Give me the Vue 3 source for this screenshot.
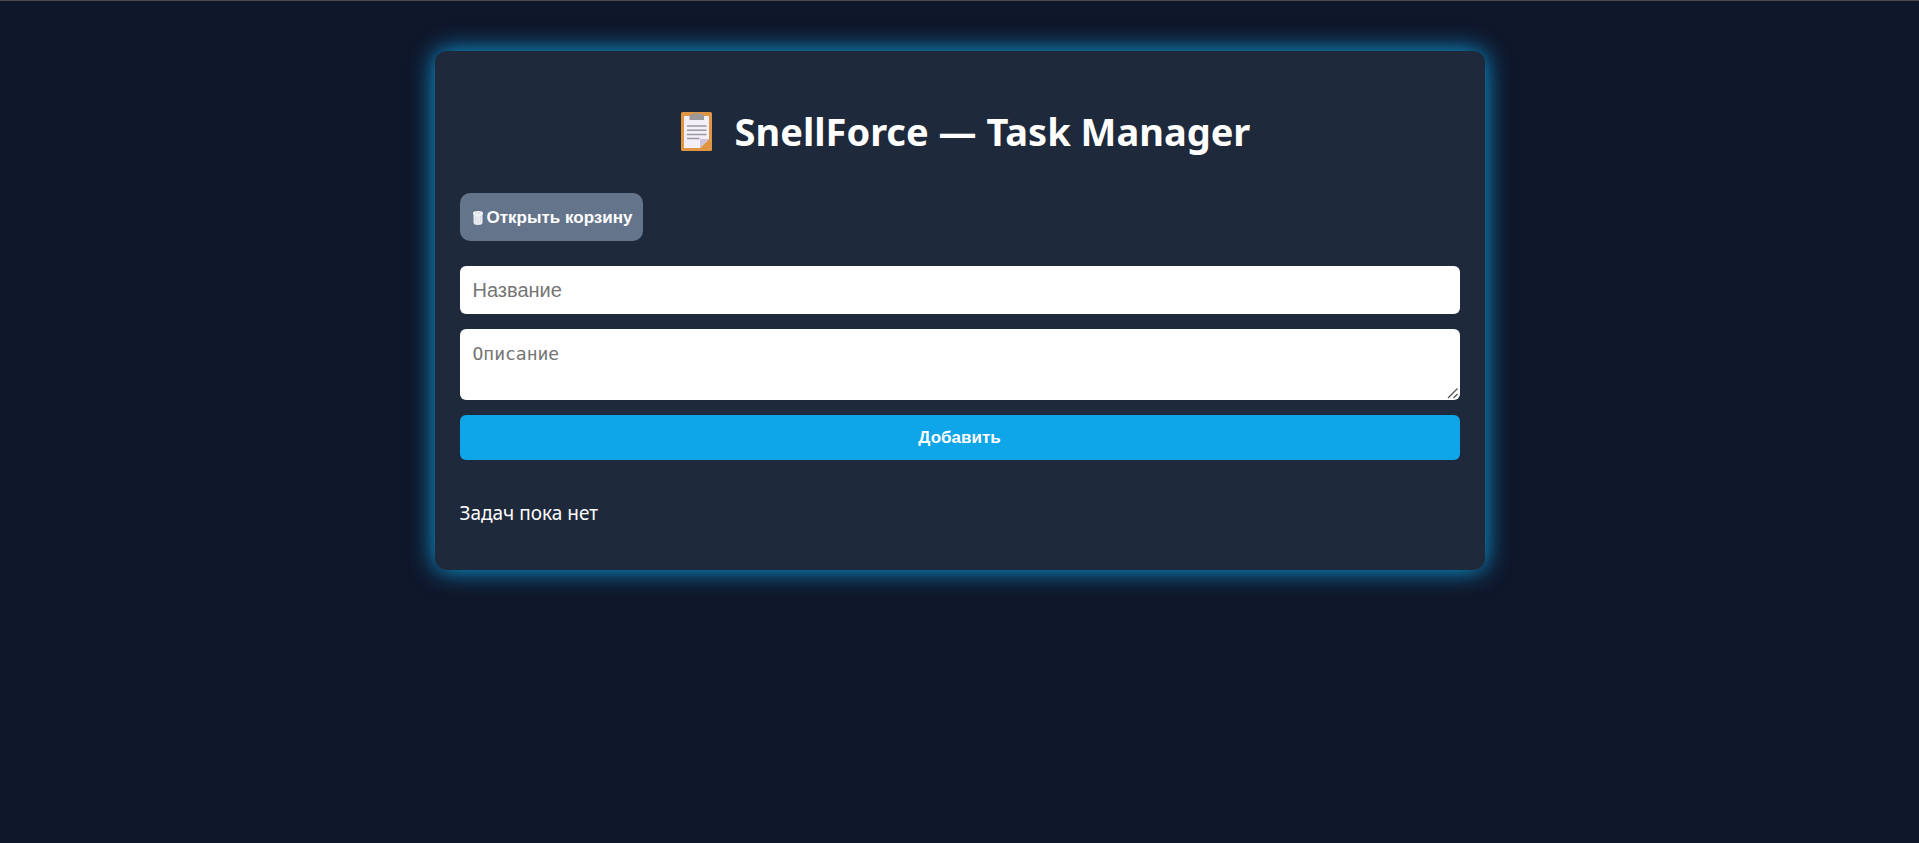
<script setup>
import { ref } from 'vue'

const title = ref('')
const description = ref('')
const tasks = ref([])

function addTask() {
  if (!title.value.trim()) return
  tasks.value.push({ title: title.value, description: description.value })
  title.value = ''
  description.value = ''
}
</script>

<template>
  <div class="page">
    <main class="card">
      <h1>
        <svg class="clipboard" viewBox="0 0 56 40" aria-hidden="true">
          <rect x="12" y="1" width="31" height="39" rx="1.5" fill="#e09542" />
          <path d="M15 5H40V28L31 37H15Z" fill="#f3eef8" />
          <path d="M31 28H40L31 37Z" fill="#cdc4dc" />
          <path d="M20.500 9V5.500Q20.500 3 23 3H25A2.700 2.700 0 0 1 30 3H32.500Q35 3 35 5.500V9Z" fill="#9a9a9a" />
          <circle cx="27.500" cy="3" r="1" fill="#e09542" />
          <path d="M18 15H37.500M18 19.200H37.500M18 23.500H37.500M18 27.500H30.500" stroke="#9c9aa0" stroke-width="1.500" />
        </svg>
        SnellForce — Task Manager
      </h1>

      <button type="button" class="trash">
        <svg class="bin" viewBox="0 0 10 14" aria-hidden="true">
          <path d="M0.500 2H9.500V11.500Q9.500 14 5 14Q0.500 14 0.500 11.500Z" fill="#e9edf1" />
          <ellipse cx="5" cy="2.200" rx="5" ry="2.200" fill="#f4f5f7" />
          <ellipse cx="5" cy="2.300" rx="3" ry="0.800" fill="#d5d8de" />
          <path d="M2.500 5V12M5 5.500V12.500M7.500 5V12" stroke="#d3dae3" stroke-width="0.800" />
        </svg>
        Открыть корзину
      </button>

      <form class="form" @submit.prevent="addTask">
        <input v-model="title" type="text" placeholder="Название" aria-label="Название" />
        <div class="area">
          <textarea v-model="description" placeholder="Описание" aria-label="Описание"></textarea>
          <svg class="grip" viewBox="0 0 12 12" aria-hidden="true">
            <path d="M1 11L10.500 1.500M6.500 11L10.500 7" fill="none" stroke="#555" stroke-width="1.300" />
          </svg>
        </div>
        <button type="submit" class="add">Добавить</button>
      </form>

      <p v-if="!tasks.length" class="empty">Задач пока нет</p>
      <ul v-else class="list">
        <li v-for="(task, i) in tasks" :key="i">{{ task.title }}</li>
      </ul>
    </main>
  </div>
</template>

<style>
body {
  background: #0f172a;
}
</style>

<style scoped>
.page {
  border-top: 1px solid #4b4b4b;
  padding: 50px 20px;
  color: #fff;
  font-family: "Segoe UI", "Noto Sans", "Open Sans", sans-serif;
  font-size: 19px;
}

.card {
  box-sizing: border-box;
  max-width: 1050px;
  margin: 0 auto;
  padding: 52px 25px 43px;
  border-radius: 12px;
  background: #1e293b;
  box-shadow: 0 0 25px #0ea5e9;
}

h1 {
  margin: 0 0 34px;
  font-size: 38px;
  line-height: 56px;
  text-align: center;
}

.clipboard {
  width: 56px;
  height: 40px;
  vertical-align: -5px;
}

button {
  border: 0;
  color: #fff;
  font-family: "Liberation Sans", Arial, sans-serif;
  font-size: 17px;
  font-weight: 700;
  line-height: 20px;
  cursor: pointer;
}

.trash {
  display: flex;
  align-items: center;
  gap: 4px;
  margin-bottom: 25px;
  padding: 15px 11px 13px 13px;
  border-radius: 10px;
  background: #64748b;
}

.bin {
  width: 10px;
  height: 14px;
}

.form {
  display: flex;
  flex-direction: column;
  gap: 15px;
}

input,
textarea {
  box-sizing: border-box;
  display: block;
  width: 100%;
  padding: 13px;
  border: 0;
  border-radius: 6px;
  background: #fff;
  color: #000;
}

input {
  height: 48px;
  font-family: "Liberation Sans", Arial, sans-serif;
  font-size: 20px;
}

.area {
  position: relative;
}

textarea {
  height: 71px;
  font-family: "DejaVu Sans Mono", monospace;
  font-size: 18px;
  line-height: 24px;
  resize: vertical;
}

textarea::-webkit-resizer {
  background: transparent;
}

.grip {
  position: absolute;
  right: 1px;
  bottom: 1px;
  width: 12px;
  height: 12px;
  pointer-events: none;
}

input::placeholder,
textarea::placeholder {
  color: #757575;
}

.add {
  padding: 12px;
  border-radius: 6px;
  background: #0ea5e9;
  line-height: 21px;
}

.empty {
  margin: 39px 0 0;
  line-height: 28px;
}

.list {
  margin: 39px 0 0;
  padding-left: 25px;
  line-height: 28px;
}
</style>
